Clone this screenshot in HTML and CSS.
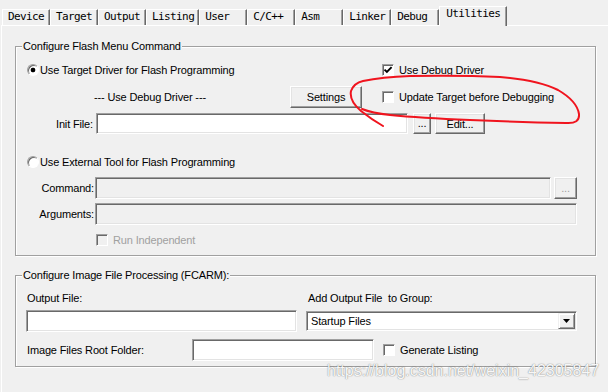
FILE: index.html
```html
<!DOCTYPE html>
<html lang="en">
<head>
<meta charset="utf-8">
<title>Options for Target - Utilities</title>
<link rel="stylesheet" href="styles.css">
</head>
<body>
<div class="tabs">
  <div class="tab">Device</div>
  <div class="tab">Target</div>
  <div class="tab">Output</div>
  <div class="tab">Listing</div>
  <div class="tab">User</div>
  <div class="tab">C/C++</div>
  <div class="tab">Asm</div>
  <div class="tab">Linker</div>
  <div class="tab">Debug</div>
  <div class="tab active">Utilities</div>
</div>
<div class="panel">
  <fieldset class="grp grp-flash">
    <legend>Configure Flash Menu Command</legend>
    <div class="row row-target">
      <div class="opt opt-wide"><span class="radio checked"></span><span>Use Target Driver for Flash Programming</span></div>
      <div class="opt"><span class="chk"><svg viewBox="0 0 10 10"><path d="M1.5 4.6 L3.9 7 L8.6 2.2" fill="none" stroke="#000" stroke-width="1.9"/></svg></span><span>Use Debug Driver</span></div>
    </div>
    <div class="row row-driver">
      <span class="driver-note">--- Use Debug Driver ---</span>
      <span class="btn btn-settings">Settings</span>
      <div class="opt opt-update"><span class="chk"></span><span>Update Target before Debugging</span></div>
    </div>
    <div class="row row-init">
      <span class="lbl lbl-init">Init File:</span>
      <span class="inp inp-init"></span>
      <span class="btn btn-dots">...</span>
      <span class="btn btn-edit">Edit...</span>
    </div>
    <div class="row row-ext">
      <div class="opt opt-ext"><span class="radio"></span><span>Use External Tool for Flash Programming</span></div>
    </div>
    <div class="row row-field">
      <span class="lbl lbl-cmd">Command:</span>
      <span class="inp inp-cmd disabled"></span>
      <span class="btn btn-dots btn-cmd">...</span>
    </div>
    <div class="row row-field row-args">
      <span class="lbl lbl-cmd">Arguments:</span>
      <span class="inp inp-args disabled"></span>
    </div>
    <div class="row row-run">
      <div class="opt opt-run disabled"><span class="chk disabled"></span><span>Run Independent</span></div>
    </div>
  </fieldset>
  <fieldset class="grp grp-image">
    <legend>Configure Image File Processing (FCARM):</legend>
    <div class="row row-labels">
      <span class="lbl-out">Output File:</span>
      <span>Add Output File&nbsp; to Group:</span>
    </div>
    <div class="row row-out">
      <span class="inp inp-out"></span>
      <div class="select"><span class="select-text">Startup Files</span><span class="select-btn"><svg viewBox="0 0 7 4"><path d="M0 0 H7 L3.5 4 Z" fill="#000"/></svg></span></div>
    </div>
    <div class="row row-root">
      <span class="lbl-root">Image Files Root Folder:</span>
      <span class="inp inp-root"></span>
      <div class="opt opt-gen"><span class="chk"></span><span>Generate Listing</span></div>
    </div>
  </fieldset>
</div>
<svg class="scribble" viewBox="0 0 608 392"><path d="M383 126 Q371 119 361 111 Q349 101 351 91 Q354 83 363 81 Q382 77 410 76 Q460 75 500 77 Q538 80 558 90 Q577 101 579 114 Q580 124 566 123 Q520 122 470 120 Q420 118 390 115 Q372 113 362 109" fill="none" stroke="#f0141e" stroke-width="2" stroke-linecap="round" stroke-linejoin="round"/></svg>
<div class="watermark">https://blog.csdn.net/weixin_42305847</div>
</body>
</html>
```
FILE: styles.css
```css
* { box-sizing: border-box; }
html, body { margin: 0; padding: 0; }
body {
  width: 608px; height: 392px; overflow: hidden; position: relative;
  background: #f0f0f0; color: #000;
  font: 11px/14px "Liberation Sans", Arial, sans-serif; letter-spacing: -0.15px;
}
.tabs { display: flex; align-items: flex-end; height: 25px; padding-left: 2px; position: relative; z-index: 1; }
.tab {
  flex: none; height: 16px; min-width: 48px; padding: 0 4px 0 5px; white-space: nowrap;
  font: 11px/14px "DejaVu Sans Mono", monospace; letter-spacing: -0.6px;
  border-top: 1px solid #fff; border-left: 1px solid #fff; border-right: 1px solid #696969;
  box-shadow: inset -1px 0 #a0a0a0;
}
.tab.active { height: 20px; margin-bottom: -1px; padding: 0 6px; line-height: 13px; background: #f0f0f0; }
.panel { margin-left: 1px; border-top: 1px solid #fff; border-left: 1px solid #fff; height: 367px; }
.grp {
  margin: 13px 0 0 13px; padding: 0 0 8px; width: 581px; min-width: 0;
  border: 1px solid #a0a0a0; box-shadow: inset 1px 1px #fff, 1px 1px #fff;
}
.grp legend { margin-left: 6px; padding: 0 1px; line-height: 14px; background: #f0f0f0; }
.grp-image { margin-top: 12px; padding-bottom: 5px; }
.row { display: flex; align-items: center; white-space: nowrap; }
.opt { display: flex; align-items: center; white-space: nowrap; }
.opt.disabled { color: #a0a0a0; }
.radio {
  flex: none; width: 12px; height: 12px; margin-right: 1px; border-radius: 50%;
  border: 1px solid; border-color: #a0a0a0 #fff #fff #a0a0a0; background: #fff; box-shadow: inset 1px 1px #696969;
}
.radio.checked { background: radial-gradient(circle at 50% 50%, #000 0 2px, #fff 2.7px); }
.chk {
  flex: none; display: flex; width: 12px; height: 12px; margin-right: 5px;
  border: 1px solid; border-color: #a0a0a0 #fff #fff #a0a0a0; background: #fff; box-shadow: inset 1px 1px #696969;
}
.chk svg { width: 10px; height: 10px; }
.chk.disabled { background: #f0f0f0; }
.inp {
  flex: none; display: block; background: #fff;
  border: 1px solid; border-color: #a0a0a0 #fff #fff #a0a0a0; box-shadow: inset 1px 1px #696969, inset -1px -1px #e3e3e3;
}
.inp.disabled { background: #f0f0f0; }
.btn {
  flex: none; display: flex; align-items: center; justify-content: center; background: #f0f0f0;
  border: 1px solid; border-color: #fff #696969 #696969 #fff; box-shadow: inset -1px -1px #a0a0a0, inset 1px 1px #e3e3e3;
}
.lbl { flex: none; text-align: right; }

.row-target { height: 14px; margin-top: 10px; }
.opt-wide { margin-left: 11px; width: 355px; }
.row-driver { height: 22px; margin-top: 9px; }
.driver-note { margin-left: 78px; width: 196px; }
.btn-settings { width: 72px; height: 22px; }
.opt-update { margin-left: 20px; }
.row-init { height: 21px; margin-top: 5px; }
.lbl-init { width: 77px; margin-right: 3px; }
.inp-init { width: 312px; height: 21px; }
.btn-dots { width: 18px; height: 21px; margin-left: 5px; align-items: flex-end; padding-bottom: 3px; }
.btn-edit { width: 50px; height: 21px; margin-left: 4px; }
.row-ext { height: 14px; margin-top: 21px; }
.opt-ext { margin-left: 11px; }
.row-field { height: 22px; margin-top: 8px; }
.row-args { margin-top: 4px; }
.lbl-cmd { width: 78px; margin-right: 1px; }
.inp-cmd { width: 456px; height: 22px; }
.btn-cmd { width: 23px; height: 22px; margin-left: 3px; color: #a0a0a0; }
.inp-args { width: 482px; height: 22px; }
.row-run { height: 14px; margin-top: 8px; }
.opt-run { margin-left: 80px; }

.row-labels { height: 14px; margin-top: 9px; }
.lbl-out { margin-left: 11px; width: 281px; }
.row-out { height: 22px; margin-top: 5px; }
.inp-out { margin-left: 10px; width: 271px; height: 22px; }
.select {
  flex: none; display: flex; align-items: center; margin-left: 9px; width: 271px; height: 20px; padding: 1px;
  background: #fff; border: 1px solid; border-color: #a0a0a0 #fff #fff #a0a0a0; box-shadow: inset 1px 1px #696969, inset -1px -1px #e3e3e3;
}
.select-text { padding-left: 3px; flex: 1; }
.select-btn {
  display: flex; align-items: center; justify-content: center; width: 17px; height: 16px; background: #f0f0f0;
  border: 1px solid; border-color: #f0f0f0 #696969 #696969 #f0f0f0; box-shadow: inset 1px 1px #fff, inset -1px -1px #a0a0a0;
}
.select-btn svg { width: 7px; height: 4px; }
.row-root { height: 22px; margin-top: 7px; }
.lbl-root { margin-left: 11px; width: 165px; }
.inp-root { width: 182px; height: 22px; }
.opt-gen { margin-left: 9px; }

.scribble { position: absolute; left: 0; top: 0; width: 608px; height: 392px; pointer-events: none; }
.watermark {
  position: absolute; left: 327px; top: 362px; font: 16px/18px "Liberation Sans", Arial, sans-serif; letter-spacing: 0;
  color: rgba(255,255,255,0.95); text-shadow: 0 0 1px rgba(80,80,80,0.75), 0 0 2px rgba(0,0,0,0.15);
}
```
